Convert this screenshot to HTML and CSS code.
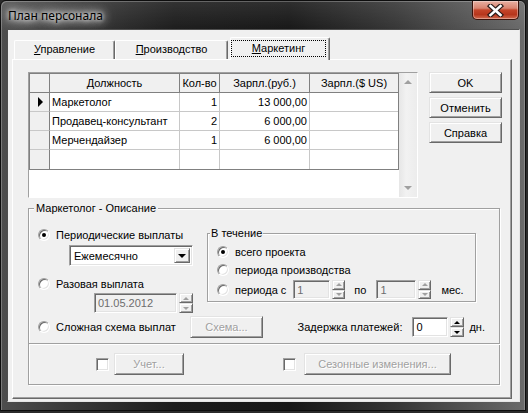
FILE: index.html
```html
<!DOCTYPE html>
<html lang="ru">
<head>
  <meta charset="UTF-8">
  <title>План персонала</title>
  <link rel="stylesheet" href="styles.css">
</head>
<body>
  <div class="window">
    <div class="titlebar">
      <span class="title">План персонала</span>
      <div class="close-btn">
        <svg width="17" height="13" viewBox="0 0 17 13">
          <path d="M3.5 2 L13.5 11 M13.5 2 L3.5 11" stroke="#2b1c1a" stroke-width="5" stroke-linecap="square"/>
          <path d="M3.5 2 L13.5 11 M13.5 2 L3.5 11" stroke="#fff" stroke-width="2.6" stroke-linecap="square"/>
        </svg>
      </div>
    </div>

    <div class="client">
      <div class="tabs">
        <div class="tab tab-first"><u>У</u>правление</div>
        <div class="tab tab-second"><u>П</u>роизводство</div>
        <div class="tab tab-active"><span class="focus"><u>М</u>аркетинг</span></div>
      </div>

      <div class="panel">
        <div class="top-row">
          <div class="grid">
            <div class="table">
              <div class="row head">
                <div class="cell ind"></div>
                <div class="cell c-name center">Должность</div>
                <div class="cell c-qty center">Кол-во</div>
                <div class="cell c-rub center">Зарпл.(руб.)</div>
                <div class="cell c-usd center">Зарпл.($ US)</div>
              </div>
              <div class="row">
                <div class="cell ind"><span class="pointer"></span></div>
                <div class="cell c-name">Маркетолог</div>
                <div class="cell c-qty num">1</div>
                <div class="cell c-rub num">13 000,00</div>
                <div class="cell c-usd"></div>
              </div>
              <div class="row">
                <div class="cell ind"></div>
                <div class="cell c-name">Продавец-консультант</div>
                <div class="cell c-qty num">2</div>
                <div class="cell c-rub num">6 000,00</div>
                <div class="cell c-usd"></div>
              </div>
              <div class="row">
                <div class="cell ind"></div>
                <div class="cell c-name">Мерчендайзер</div>
                <div class="cell c-qty num">1</div>
                <div class="cell c-rub num">6 000,00</div>
                <div class="cell c-usd"></div>
              </div>
              <div class="row last">
                <div class="cell ind"></div>
                <div class="cell c-name"></div>
                <div class="cell c-qty"></div>
                <div class="cell c-rub"></div>
                <div class="cell c-usd"></div>
              </div>
            </div>
            <div class="vscroll">
              <span class="arrow-up gray"></span>
              <span class="arrow-down gray"></span>
            </div>
          </div>

          <div class="side-buttons">
            <button class="btn">OK</button>
            <button class="btn">Отменить</button>
            <button class="btn">Справка</button>
          </div>
        </div>

        <div class="group">
          <span class="legend">Маркетолог - Описание</span>
          <div class="group-top">
            <div class="pay-col">
              <div class="option first">
                <span class="radio checked"></span>
                <span>Периодические выплаты</span>
              </div>
              <div class="combo">
                <span class="combo-text">Ежемесячно</span>
                <span class="combo-btn"><span class="arrow-down"></span></span>
              </div>
              <div class="option second">
                <span class="radio"></span>
                <span>Разовая выплата</span>
              </div>
              <div class="date-row">
                <div class="field disabled date">01.05.2012</div>
                <div class="spin">
                  <span class="spin-btn"><span class="arrow-up gray"></span></span>
                  <span class="spin-btn"><span class="arrow-down gray"></span></span>
                </div>
              </div>
            </div>

            <div class="period-box">
              <span class="legend small">В течение</span>
              <div class="option p1">
                <span class="radio checked"></span>
                <span>всего проекта</span>
              </div>
              <div class="option p2">
                <span class="radio"></span>
                <span>периода производства</span>
              </div>
              <div class="option p3">
                <span class="radio"></span>
                <span>периода с</span>
                <div class="field disabled months m-from">1</div>
                <div class="spin short">
                  <span class="spin-btn"><span class="arrow-up gray"></span></span>
                  <span class="spin-btn"><span class="arrow-down gray"></span></span>
                </div>
                <span class="to-label">по</span>
                <div class="field disabled months m-to">1</div>
                <div class="spin short">
                  <span class="spin-btn"><span class="arrow-up gray"></span></span>
                  <span class="spin-btn"><span class="arrow-down gray"></span></span>
                </div>
                <span class="unit">мес.</span>
              </div>
            </div>
          </div>

          <div class="group-bottom">
            <div class="option complex">
              <span class="radio"></span>
              <span>Сложная схема выплат</span>
            </div>
            <button class="btn scheme" disabled>Схема...</button>
            <span class="delay-label">Задержка платежей:</span>
            <div class="field delay">0</div>
            <div class="spin">
              <span class="spin-btn"><span class="arrow-up"></span></span>
              <span class="spin-btn"><span class="arrow-down"></span></span>
            </div>
            <span class="unit days">дн.</span>
          </div>
        </div>

        <div class="extra-box">
          <span class="checkbox"></span>
          <button class="btn account" disabled>Учет...</button>
          <span class="checkbox second"></span>
          <button class="btn seasonal" disabled>Сезонные изменения...</button>
        </div>
      </div>
    </div>
  </div>
</body>
</html>
```

FILE: styles.css
```css
body {
  margin: 0;
  width: 528px;
  height: 413px;
  overflow: hidden;
  background: #2a2a2a;
  font-family: 'Liberation Sans', Arial, sans-serif;
  font-size: 11px;
  color: #000;
}

/* окно */
.window {
  width: 526px;
  height: 411px;
  box-sizing: border-box;
  border: 1px solid #0d0d0d;
  border-radius: 6px 6px 0 0;
  padding: 0 5px 0 6px;
  display: flex;
  flex-direction: column;
  background:
    linear-gradient(to bottom, rgba(255,255,255,0.10), rgba(255,255,255,0) 30px),
    linear-gradient(to right, #4e4e4e 0%, #3b3b3b 12%, #1c1c1c 33%, #171717 55%, #353535 75%, #6a6a6a 100%);
  box-shadow: inset 1px 1px 0 rgba(255,255,255,0.25), inset -1px 0 0 rgba(255,255,255,0.2);
}

.titlebar {
  height: 28px;
  display: flex;
  justify-content: space-between;
  flex-shrink: 0;
}

.title {
  align-self: center;
  margin-left: 1px;
  margin-top: 1px;
  font-family: 'Noto Sans', 'Liberation Sans', sans-serif;
  font-size: 12px;
  color: #000;
  text-shadow: 0 0 4px #fff, 0 0 8px #fff, 0 0 12px rgba(255,255,255,0.9), 0 0 16px rgba(255,255,255,0.7);
}

.close-btn {
  width: 47px;
  height: 19px;
  box-sizing: border-box;
  margin-right: 1px;
  border: 1px solid #3a120a;
  border-top: none;
  border-radius: 0 0 5px 5px;
  display: flex;
  align-items: center;
  justify-content: center;
  background: linear-gradient(to bottom, #e8b0a2 0%, #d98470 40%, #c4452a 50%, #b7361c 75%, #d06a4f 100%);
  box-shadow: inset 0 0 0 1px rgba(255,255,255,0.35);
}

.client {
  height: 373px;
  box-sizing: border-box;
  border: 1px solid;
  border-color: #4f4f4f #e6e6e6 #e6e6e6 #4f4f4f;
  background: #f0f0f0;
  padding: 7px 7px 2px 4px;
}

/* вкладки */
.tabs {
  height: 22px;
  display: flex;
  align-items: flex-end;
  padding-left: 2px;
}

.tab {
  height: 19px;
  box-sizing: border-box;
  border-top: 1px solid #fff;
  border-left: 1px solid #fff;
  border-right: 1px solid #696969;
  border-radius: 2px 2px 0 0;
  box-shadow: inset -1px 0 0 #a0a0a0;
  text-align: center;
  line-height: 17px;
}

.tab-first { width: 101px; }
.tab-second { width: 113px; }

.tab-active {
  width: 100px;
  height: 23px;
  margin-left: 2px;
  margin-bottom: -1px;
  position: relative;
  z-index: 1;
  background: #f0f0f0;
  padding: 2px 3px 4px 0;
}

.focus {
  display: block;
  height: 17px;
  box-sizing: border-box;
  border: 1px dotted #000;
  line-height: 15px;
}

.panel {
  height: 340px;
  box-sizing: border-box;
  border: 1px solid;
  border-color: #fff #696969 #696969 #fff;
  box-shadow: inset -1px -1px 0 #a0a0a0;
  padding: 12px 0 0 15px;
}

/* таблица */
.top-row {
  display: flex;
}

.grid {
  width: 390px;
  height: 126px;
  box-sizing: border-box;
  border: 1px solid;
  border-color: #a0a0a0 #fff #fff #a0a0a0;
  background: #fff;
  display: flex;
}

.table {
  width: 370px;
  align-self: flex-start;
  border: 1px solid #808080;
  box-sizing: border-box;
}

.row {
  display: flex;
  height: 19px;
}

.cell {
  height: 19px;
  box-sizing: border-box;
  border-right: 1px solid #c8c8c8;
  border-bottom: 1px solid #c8c8c8;
  line-height: 18px;
  padding: 0 2px;
  white-space: nowrap;
  overflow: hidden;
}

.ind { width: 20px; background: #f0f0f0; border-right-color: #808080; display: flex; align-items: center; justify-content: center; }
.c-name { width: 130px; }
.c-qty { width: 40px; }
.c-rub { width: 90px; }
.c-usd { width: 88px; border-right: none; }

.head .cell {
  background: #f0f0f0;
  border-right-color: #808080;
  border-bottom-color: #808080;
}

.row.last .cell { border-bottom: none; }

.center { text-align: center; }
.num { text-align: right; }

.pointer {
  width: 0;
  height: 0;
  border-left: 5px solid #000;
  border-top: 5px solid transparent;
  border-bottom: 5px solid transparent;
  margin-left: 1px;
}

.vscroll {
  width: 18px;
  background: linear-gradient(to right, #e6e6e6, #f2f2f2 40%, #ececec);
  display: flex;
  flex-direction: column;
  justify-content: space-between;
  align-items: center;
  padding: 7px 0 7px;
  box-sizing: border-box;
}

.arrow-up, .arrow-down {
  display: block;
  width: 0;
  height: 0;
  border-left: 4px solid transparent;
  border-right: 4px solid transparent;
}

.arrow-up { border-bottom: 4px solid #000; }
.arrow-down { border-top: 4px solid #000; }
.arrow-up.gray { border-bottom-color: #a0a0a0; }
.arrow-down.gray { border-top-color: #a0a0a0; }

.side-buttons {
  margin-left: 11px;
  width: 73px;
  display: flex;
  flex-direction: column;
  gap: 4px;
}

.btn {
  height: 21px;
  box-sizing: border-box;
  padding: 0;
  border: 1px solid;
  border-color: #e3e3e3 #696969 #696969 #e3e3e3;
  box-shadow: inset 1px 1px 0 #fff, inset -1px -1px 0 #a0a0a0;
  background: #f0f0f0;
  font-family: inherit;
  font-size: 11px;
  color: #000;
}

.btn:disabled {
  color: #a0a0a0;
  text-shadow: 1px 1px 0 #fff;
}

/* группы */
.group, .extra-box {
  width: 472px;
  box-sizing: border-box;
  border: 1px solid #a0a0a0;
  box-shadow: inset 1px 1px 0 #fff, 1px 1px 0 #fff;
}

.group {
  height: 136px;
  margin-top: 10px;
  position: relative;
}

.legend {
  position: absolute;
  top: -7px;
  left: 5px;
  padding: 0 2px;
  background: #f0f0f0;
  line-height: 13px;
}

.legend.small { left: 2px; padding: 0 1px; }

.group-top {
  display: flex;
  padding-left: 9px;
  height: 104px;
}

.pay-col {
  width: 169px;
}

.option {
  display: flex;
  align-items: center;
  height: 16px;
}

.option .radio { margin-right: 6px; flex-shrink: 0; }

.option.first { margin-top: 18px; }
.option.second { margin-top: 10px; }

.radio {
  width: 12px;
  height: 12px;
  box-sizing: border-box;
  border-radius: 50%;
  border: 1px solid;
  border-color: #a0a0a0 #fff #fff #a0a0a0;
  background: #fff;
  box-shadow: inset 1px 1px 0 #696969, inset -1px -1px 0 #e3e3e3;
  position: relative;
}

.radio.checked::after {
  content: '';
  position: absolute;
  left: 3px;
  top: 3px;
  width: 4px;
  height: 4px;
  border-radius: 50%;
  background: #000;
}

.checkbox {
  width: 13px;
  height: 13px;
  box-sizing: border-box;
  border: 1px solid;
  border-color: #a0a0a0 #fff #fff #a0a0a0;
  box-shadow: inset 1px 1px 0 #696969, inset -1px -1px 0 #e3e3e3;
  background: #fff;
}

.field {
  box-sizing: border-box;
  border: 1px solid;
  border-color: #a0a0a0 #fff #fff #a0a0a0;
  box-shadow: inset 1px 1px 0 #696969, inset -1px -1px 0 #e3e3e3;
  background: #fff;
  padding-left: 3px;
  display: flex;
  align-items: center;
}

.field.disabled {
  background: #f0f0f0;
  color: #6d6d6d;
}

.combo {
  width: 124px;
  height: 21px;
  margin: 2px 0 0 31px;
  box-sizing: border-box;
  border: 1px solid;
  border-color: #a0a0a0 #fff #fff #a0a0a0;
  box-shadow: inset 1px 1px 0 #696969, inset -1px -1px 0 #e3e3e3;
  background: #fff;
  display: flex;
  align-items: center;
  padding: 2px 2px 2px 4px;
}

.combo-text { flex: 1; }

.combo-btn {
  width: 16px;
  height: 15px;
  box-sizing: border-box;
  border: 1px solid;
  border-color: #e3e3e3 #696969 #696969 #e3e3e3;
  box-shadow: inset 1px 1px 0 #fff, inset -1px -1px 0 #a0a0a0;
  background: #f0f0f0;
  display: flex;
  align-items: center;
  justify-content: center;
}

.date-row {
  display: flex;
  margin: 1px 0 0 56px;
}

.date { width: 83px; height: 20px; }

.spin {
  width: 14px;
  height: 20px;
  margin-left: 2px;
  display: flex;
  flex-direction: column;
}

.spin.short { width: 13px; height: 19px; }

.spin-btn {
  flex: 1;
  box-sizing: border-box;
  border: 1px solid;
  border-color: #e3e3e3 #696969 #696969 #e3e3e3;
  box-shadow: inset 1px 1px 0 #fff, inset -1px -1px 0 #a0a0a0;
  background: #f0f0f0;
  display: flex;
  align-items: center;
  justify-content: center;
}

.spin-btn .arrow-up, .spin-btn .arrow-down {
  border-left-width: 3px;
  border-right-width: 3px;
}

.spin-btn .arrow-up { border-bottom-width: 3px; }
.spin-btn .arrow-down { border-top-width: 3px; }

.period-box {
  width: 269px;
  height: 69px;
  margin-top: 24px;
  box-sizing: border-box;
  border: 1px solid #a0a0a0;
  box-shadow: inset 1px 1px 0 #fff, 1px 1px 0 #fff;
  position: relative;
  padding-left: 9px;
}

.option.p1 { margin-top: 10px; }
.option.p2 { margin-top: 2px; }
.option.p3 { margin-top: 2px; height: 19px; }

.months { height: 19px; }
.m-from { width: 37px; margin-left: 7px; }
.m-to { width: 40px; margin-left: 10px; }
.to-label { margin-left: 9px; }
.unit { margin-left: 10px; }

.group-bottom {
  display: flex;
  align-items: center;
  height: 22px;
  margin-top: 3px;
  padding: 0 14px 0 9px;
}

.option.complex { width: 152px; height: 22px; }

.scheme { width: 73px; height: 22px; }

.delay-label { margin-left: auto; }

.delay { width: 36px; height: 20px; margin-left: 10px; }

.unit.days { margin-left: 5px; }

.extra-box {
  height: 42px;
  margin-top: -1px;
  display: flex;
  align-items: center;
  padding-left: 67px;
}

.account { width: 70px; height: 22px; margin-left: 5px; }
.checkbox.second { margin-left: 99px; }
.seasonal { width: 147px; height: 22px; margin-left: 8px; }
```
